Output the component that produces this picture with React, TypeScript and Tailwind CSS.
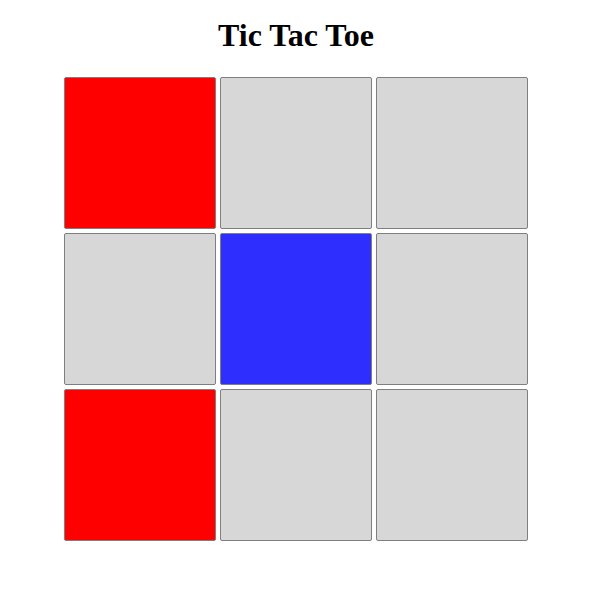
import React, { useState } from 'react';

type Mark = 'X' | 'O' | null;

const START: Mark[] = ['X', null, null, null, 'O', null, 'X', null, null];

export default function App() {
  const [cells, setCells] = useState<Mark[]>(START);

  const play = (i: number) => {
    if (cells[i]) return;
    const xs = cells.filter(c => c === 'X').length;
    const os = cells.filter(c => c === 'O').length;
    const next = [...cells];
    next[i] = xs > os ? 'O' : 'X';
    setCells(next);
  };

  return (
    <div className="w-[592px] flex flex-col items-center pt-[17px] font-['Liberation_Serif',serif]">
      <h1 className="text-[32px] leading-[37px] font-bold text-black">Tic Tac Toe</h1>
      <div className="mt-[23px] grid grid-cols-[repeat(3,152px)] grid-rows-[repeat(3,152px)] gap-[4px]">
        {cells.map((c, i) => (
          <button
            key={i}
            onClick={() => play(i)}
            className={`w-[152px] h-[152px] border border-[#7f7f7f] rounded-[2px] ${
              c === 'X' ? 'bg-[#ff0000]' : c === 'O' ? 'bg-[#2e2eff]' : 'bg-[#d7d7d7]'
            }`}
          />
        ))}
      </div>
    </div>
  );
}
